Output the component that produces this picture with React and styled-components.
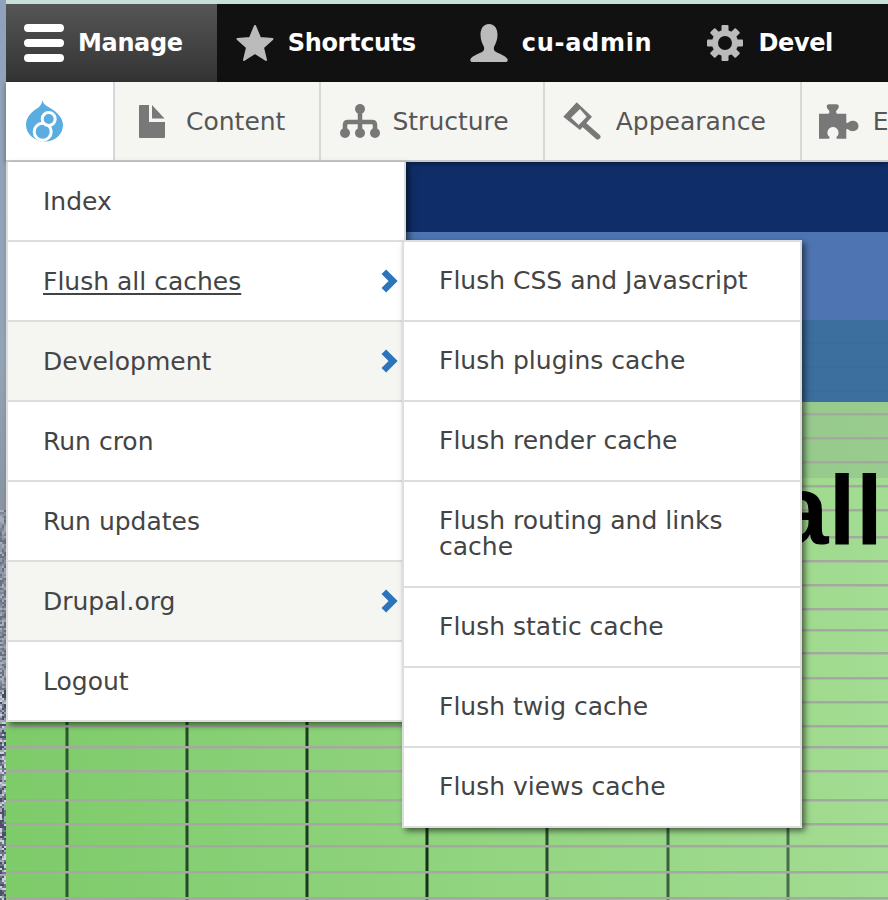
import React from "react";
import styled, { createGlobalStyle } from "styled-components";

const GlobalStyle = createGlobalStyle`
  html, body {
    margin: 0;
    padding: 0;
    background: #5a6272;
  }
  * {
    box-sizing: border-box;
  }
`;

const mainLinks = [
  { label: "Index" },
  { label: "Flush all caches", more: true, active: true },
  { label: "Development", more: true, alt: true },
  { label: "Run cron" },
  { label: "Run updates" },
  { label: "Drupal.org", more: true, alt: true },
  { label: "Logout" },
];

const flushLinks = [
  "Flush CSS and Javascript",
  "Flush plugins cache",
  "Flush render cache",
  "Flush routing and links cache",
  "Flush static cache",
  "Flush twig cache",
  "Flush views cache",
];

const gridRows = [414, 438, 462, 486, 510, 537, 561, 585, 609, 630, 653, 678, 702, 726, 747, 771, 800, 824, 846, 872, 898];
const gridCols = [
  { x: 67, color: "#2c5530" },
  { x: 187, color: "#24492a" },
  { x: 307, color: "#1c3a20" },
  { x: 427, color: "#16301a" },
  { x: 547, color: "#2a4a2c" },
  { x: 668, color: "#3c5f3e" },
  { x: 788, color: "#4a6e4c" },
];

// grainy part of the desktop picture that shows down the left edge
const softGrain = ["#6a7284", "#7d8597", "#929aaa", "#a8aeba"];
const hardGrain = ["#4a5166", "#6d7488", "#a3a8b6", "#ccd0d8"];
const grain = [];
let seed = 7;
for (let y = 0; y < 390; y += 2) {
  for (let x = 0; x < 6; x += 2) {
    seed = (seed * 75 + 74) % 65537;
    const palette = y < 180 ? softGrain : hardGrain;
    grain.push({ x, y, color: palette[seed % 4] });
  }
}

const HamburgerIcon = () => (
  <svg width="40" height="38" viewBox="0 0 40 38">
    <rect x="0" y="0" width="40" height="8" rx="4" fill="#fff" />
    <rect x="0" y="15" width="40" height="8" rx="4" fill="#fff" />
    <rect x="0" y="30" width="40" height="8" rx="4" fill="#fff" />
  </svg>
);

const StarIcon = () => (
  <svg width="38" height="38" viewBox="0 0 38 38">
    <polygon
      points="19,2 24,14 36.5,15 27,23.5 30,36 19,29 8,36 11,23.5 1.5,15 14,14"
      fill="#bbb"
      stroke="#bbb"
      strokeWidth="2"
      strokeLinejoin="round"
    />
  </svg>
);

const UserIcon = () => (
  <svg width="38" height="38" viewBox="0 0 38 38">
    <path
      d="M19 0C25 0 27.5 5 27.5 11C27.5 16 25.5 20 24 23C23.5 25 24 27 26 28C30 30 36 32 37.5 35C38 36.5 37.5 38 36 38L2 38C.5 38 0 36.5 .5 35C2 32 8 30 12 28C14 27 14.5 25 14 23C12.5 20 10.5 16 10.5 11C10.5 5 13 0 19 0Z"
      fill="#bbb"
    />
  </svg>
);

const GearIcon = () => (
  <svg width="36" height="36" viewBox="0 0 36 36">
    <circle cx="18" cy="18" r="10" fill="none" stroke="#bbb" strokeWidth="6" />
    {[0, 45, 90, 135, 180, 225, 270, 315].map((angle) => (
      <rect key={angle} x="14.5" y="0" width="7" height="7" rx="1" fill="#bbb" transform={`rotate(${angle} 18 18)`} />
    ))}
  </svg>
);

const DrupalIcon = () => (
  <svg width="38" height="42" viewBox="0 0 38 42">
    <path
      d="M16.5 0C17 4 20 5.5 24 8C31 12 37 18 37 25C37 34 29 41.5 19 41.5C9 41.5 0 34 0 25C0 17 6 11.5 11 8.5C14 6.5 16 4 16.5 0Z"
      fill="#59ade0"
    />
    <circle cx="16.7" cy="31.7" r="8.5" fill="#59ade0" stroke="#fff" strokeWidth="3" />
    <circle cx="22.7" cy="19" r="6.5" fill="#59ade0" stroke="#fff" strokeWidth="3" />
  </svg>
);

const FileIcon = () => (
  <svg width="26" height="33" viewBox="0 0 26 33">
    <path d="M0 1a1 1 0 0 1 1-1H10V17H26V32a1 1 0 0 1-1 1H1a1 1 0 0 1-1-1Z" fill="#787878" />
    <path d="M13 0L25.5 13.5H13Z" fill="#787878" />
  </svg>
);

const StructureIcon = () => (
  <svg width="40" height="35" viewBox="0 0 40 35">
    <circle cx="20" cy="5" r="5" fill="#787878" />
    <circle cx="5" cy="29" r="5" fill="#787878" />
    <circle cx="20" cy="29" r="5" fill="#787878" />
    <circle cx="35" cy="29" r="5" fill="#787878" />
    <path d="M20 5V29M5 29V21Q5 18 8 18H32Q35 18 35 21V29" fill="none" stroke="#787878" strokeWidth="4.5" />
  </svg>
);

const BrushIcon = () => (
  <svg width="38" height="38" viewBox="0 0 38 38">
    <path
      fillRule="evenodd"
      d="M13.7 .3L29 14.7L17 28L.3 14.7ZM8 15.7L15.7 23L23.7 14.7L17 7Z"
      fill="#787878"
    />
    <path d="M21.3 23L34.7 34.7" stroke="#787878" strokeWidth="5.5" strokeLinecap="round" />
  </svg>
);

const PuzzleIcon = () => (
  <svg width="40" height="35" viewBox="0 0 40 35">
    <path
      d="M0 9.7H9C10 9.7 11 8 10 6.5C7 4 7 .3 10 .3H17.5C20.5 .3 20.5 4 17.5 6.5C16.5 8 17.5 9.7 18.5 9.7H27.3V18C27.3 19.5 29 19 30 18C33 15.5 39.5 17 39.5 22C39.5 27 33 28.5 30 26C29 25 27.3 24.5 27.3 26V34.7H18.5C17 34.7 17 33 18.5 32C21 29 19 23 14 23C9 23 7 29 9.5 32C11 33 11 34.7 9.5 34.7H0Z"
      fill="#787878"
    />
  </svg>
);

const ChevronIcon = () => (
  <svg width="18.5" height="26" viewBox="0 0 17 24">
    <path d="M3.5 3.5L12 12L3.5 20.5" fill="none" stroke="#2d75bb" strokeWidth="6" />
  </svg>
);

const App = () => {
  return (
    <Page>
      <GlobalStyle />
      <DesktopEdge>
        <svg width="6" height="390" viewBox="0 0 6 390">
          {grain.map((cell) => (
            <rect key={`${cell.x}-${cell.y}`} x={cell.x} y={cell.y} width="2" height="2" fill={cell.color} />
          ))}
        </svg>
      </DesktopEdge>

      <Main>
        <TopEdge />

        <Bar>
          <BarTab $active $pad={18} $gap={14} $end={34}>
            <HamburgerIcon />
            Manage
          </BarTab>
          <BarTab>
            <IconBox>
              <StarIcon />
            </IconBox>
            Shortcuts
          </BarTab>
          <BarTab $spacing={0.7}>
            <IconBox>
              <UserIcon />
            </IconBox>
            cu-admin
          </BarTab>
          <BarTab>
            <IconBox>
              <GearIcon />
            </IconBox>
            Devel
          </BarTab>
        </Bar>

        <Tray>
          <LogoTab>
            <DrupalIcon />
          </LogoTab>
          <TrayTab>
            <IconBox>
              <FileIcon />
            </IconBox>
            Content
          </TrayTab>
          <TrayTab $pad={17} $gap={10}>
            <IconBox>
              <StructureIcon />
            </IconBox>
            Structure
          </TrayTab>
          <TrayTab>
            <IconBox>
              <BrushIcon />
            </IconBox>
            Appearance
          </TrayTab>
          <TrayTab>
            <IconBox>
              <PuzzleIcon />
            </IconBox>
            Extend
          </TrayTab>
        </Tray>

        <Content>
          <Navy />
          <BlueBand />
          <TealBand />
          <GreenBand>
            <GridDrawing width="882" height="498" viewBox="6 402 882 498">
              {gridCols.map((col) => (
                <rect key={col.x} x={col.x - 1.5} y="402" width="3" height="498" fill={col.color} />
              ))}
              {gridRows.map((y) => (
                <rect key={y} x="6" y={y - 1} width="882" height="2.5" fill="#a4a99f" />
              ))}
            </GridDrawing>
            <Heading>all</Heading>
          </GreenBand>

          <Menu>
            {mainLinks.map((link) => (
              <MenuRow key={link.label} $alt={link.alt}>
                <MenuLabel $active={link.active}>{link.label}</MenuLabel>
                {link.more && <ChevronIcon />}
                {link.active && (
                  <SubMenu>
                    {flushLinks.map((label) => (
                      <SubRow key={label}>{label}</SubRow>
                    ))}
                  </SubMenu>
                )}
              </MenuRow>
            ))}
          </Menu>
        </Content>
      </Main>
    </Page>
  );
};

export default App;

const Page = styled.div`
  display: flex;
  width: 888px;
  height: 900px;
  overflow: hidden;
  font-family: "DejaVu Sans", "Liberation Sans", sans-serif;
`;

const DesktopEdge = styled.div`
  flex: 0 0 6px;
  height: 900px;
  display: flex;
  align-items: flex-end;
  background: linear-gradient(180deg, #8ea3bb 0%, #95a5b8 40%, #8b95a3 57%);

  svg {
    display: block;
    filter: blur(0.5px);
  }
`;

const Main = styled.div`
  flex: 1;
  min-width: 0;
  display: flex;
  flex-direction: column;
`;

const TopEdge = styled.div`
  height: 4px;
  background: #c6e0d8;
`;

const Bar = styled.div`
  display: flex;
  height: 78px;
  background: #111;
`;

const IconBox = styled.span`
  flex: 0 0 44px;
  display: flex;
  align-items: center;
  justify-content: center;
`;

const BarTab = styled.div`
  display: flex;
  align-items: center;
  gap: ${(props) => props.$gap ?? 11}px;
  padding: 0 ${(props) => props.$end ?? 35}px 0 ${(props) => props.$pad ?? 16}px;
  color: #fff;
  font-size: 24px;
  font-weight: 700;
  letter-spacing: ${(props) => props.$spacing ?? -0.35}px;
  white-space: nowrap;
  background: ${(props) => (props.$active ? "linear-gradient(180deg, #555 0%, #333 100%)" : "none")};
`;

const Tray = styled.div`
  position: relative;
  z-index: 1;
  display: flex;
  height: 80px;
  overflow: hidden;
  background: #f5f5f2;
  border-bottom: 2px solid #c9c9c9;
  box-shadow: 0 2px 5px rgba(0, 0, 0, 0.4);
`;

const LogoTab = styled.div`
  flex: 0 0 109px;
  display: flex;
  align-items: center;
  padding-left: 20px;
  background: #fff;
  border-right: 2px solid #d8d8d8;
`;

const TrayTab = styled.div`
  flex: none;
  display: flex;
  align-items: center;
  gap: ${(props) => props.$gap ?? 12}px;
  padding: 0 34px 0 ${(props) => props.$pad ?? 15}px;
  color: #565656;
  font-size: 25px;
  white-space: nowrap;
  border-right: 2px solid #d8d8d8;
`;

const Content = styled.div`
  position: relative;
  flex: 1;
  display: flex;
  flex-direction: column;
`;

const Navy = styled.div`
  height: 70px;
  background: #0f2e69;
`;

const BlueBand = styled.div`
  height: 88px;
  background: #4e75b2;
`;

const TealBand = styled.div`
  height: 82px;
  background: repeating-linear-gradient(180deg, #3c6e9e 0, #3c6e9e 22px, #3a6b99 22px, #3a6b99 24px);
`;

const GreenBand = styled.div`
  position: relative;
  flex: 1;
  overflow: hidden;
  background:
    linear-gradient(rgba(90, 90, 120, 0.13), rgba(90, 90, 120, 0.13)) no-repeat top / 100% 76px,
    linear-gradient(90deg, #7ecb6a 0%, #a3dc93 100%);
`;

const GridDrawing = styled.svg`
  position: absolute;
  top: 0;
  left: 0;
  filter: blur(0.5px);
`;

const Heading = styled.h1`
  position: relative;
  margin: 0;
  padding: 59px 5px 0 0;
  color: #000;
  font-family: "Liberation Sans", Arial, sans-serif;
  font-size: 98px;
  font-weight: 700;
  line-height: 1;
  text-align: right;
  filter: blur(0.5px);
`;

const Menu = styled.div`
  position: absolute;
  z-index: 2;
  top: 0;
  left: 0;
  width: 400px;
  background: #fff;
  border: 2px solid #ddd;
  border-top: 0;
  box-shadow: 3px 3px 6px rgba(0, 0, 0, 0.55);
`;

const MenuRow = styled.div`
  position: relative;
  display: flex;
  align-items: center;
  justify-content: space-between;
  height: 80px;
  padding: 0 6px 0 35px;
  color: #444;
  font-size: 25px;
  background: ${(props) => (props.$alt ? "#f5f5f2" : "#fff")};
  border-bottom: 2px solid #ddd;

  &:last-child {
    border-bottom: 0;
    height: 78px;
  }
`;

const MenuLabel = styled.span`
  text-decoration: ${(props) => (props.$active ? "underline" : "none")};
  text-underline-offset: 3px;
`;

const SubMenu = styled.div`
  position: absolute;
  z-index: 2;
  top: -2px;
  left: 394px;
  width: 400px;
  background: #fff;
  border: 2px solid #ddd;
  box-shadow: 3px 3px 6px rgba(0, 0, 0, 0.55);
`;

const SubRow = styled.div`
  padding: 26px 35px;
  color: #444;
  font-size: 25px;
  line-height: 26px;
  border-bottom: 2px solid #ddd;

  &:last-child {
    border-bottom: 0;
  }
`;
